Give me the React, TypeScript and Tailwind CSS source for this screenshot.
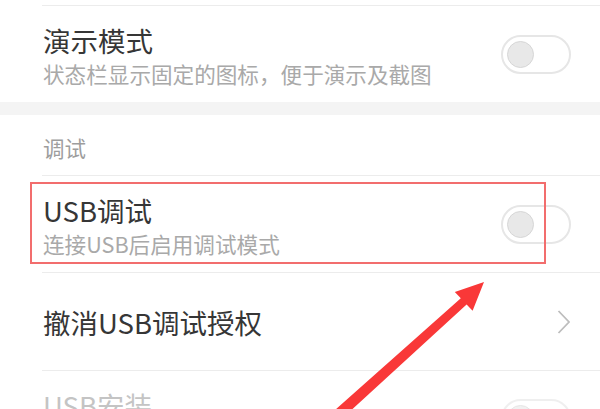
import React from "react";

const FONT = "font-['Noto_Sans_CJK_SC','Noto_Sans',sans-serif]";

function Toggle({ faded = false }: { faded?: boolean }) {
  return (
    <span
      className={`flex h-[39px] w-[70px] shrink-0 items-center rounded-full border-2 border-[#e6e6e6] bg-white pl-[4px] ${
        faded ? "opacity-60" : ""
      }`}
    >
      <span className="h-[27px] w-[27px] rounded-full border border-[#d6d6d6] bg-[#e8e8e8]" />
    </span>
  );
}

function Divider() {
  return <div className="ml-[42px] h-px bg-[#ececec]" />;
}

function SwitchRow({ title, subtitle }: { title: string; subtitle: string }) {
  return (
    <div className="flex h-[96px] items-center justify-between pl-[43px] pr-[29px]">
      <div className="flex flex-col gap-[5px] pt-[3px]">
        <span className="text-[27.5px] leading-[32px] text-[#363636]">
          {title}
        </span>
        <span className="text-[21.6px] leading-[26px] text-[#a9a9a9]">
          {subtitle}
        </span>
      </div>
      <Toggle />
    </div>
  );
}

export default function App() {
  return (
    <div
      className={`relative h-[409px] w-[600px] overflow-hidden bg-white ${FONT}`}
    >
      <div className="h-[5px]" />
      <Divider />
      <SwitchRow
        title="演示模式"
        subtitle="状态栏显示固定的图标，便于演示及截图"
      />
      <div className="h-[13px] bg-[#f4f4f4]" />

      <div className="h-[60px] pl-[43px] pt-[20px]">
        <span className="text-[21.5px] leading-[26px] text-[#9d9d9d]">
          调试
        </span>
      </div>
      <Divider />
      <SwitchRow title="USB调试" subtitle="连接USB后启用调试模式" />
      <Divider />

      <div className="flex h-[97px] items-center justify-between pl-[43px] pr-[30px]">
        <span className="text-[27.5px] leading-[32px] text-[#363636]">
          撤消USB调试授权
        </span>
        <svg width="13" height="24" viewBox="0 0 13 24" fill="none">
          <polyline
            points="1.5,1 12,12 1.5,23"
            stroke="#bdbdbd"
            strokeWidth="1.8"
          />
        </svg>
      </div>
      <Divider />
      <div className="flex items-start justify-between pl-[43px] pr-[29px] pt-[18px]">
        <span className="text-[27.5px] leading-[32px] text-[#c4c4c4]">
          USB安装
        </span>
        <span className="mt-[10px]">
          <Toggle faded />
        </span>
      </div>

      {/* highlight box */}
      <div className="absolute left-[30px] top-[182px] h-[82px] w-[516px] border-2 border-[#f26d6d]" />

      {/* pointer arrow */}
      <svg
        className="pointer-events-none absolute left-0 top-0"
        width="600"
        height="409"
        viewBox="0 0 600 409"
      >
        <polygon
          points="484,282 472.6,310.7 466.6,304.4 334,426 326,418 460.8,298.2 454.8,291.9"
          fill="#f93838"
        />
      </svg>
    </div>
  );
}
